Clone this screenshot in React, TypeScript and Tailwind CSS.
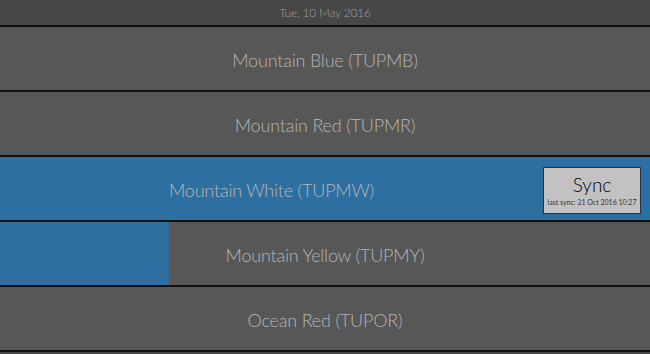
import React from 'react';

type Item = { name: string; code: string; active?: boolean; progress?: number };

const items: Item[] = [
  { name: 'Mountain Blue', code: 'TUPMB' },
  { name: 'Mountain Red', code: 'TUPMR' },
  { name: 'Mountain White', code: 'TUPMW', active: true },
  { name: 'Mountain Yellow', code: 'TUPMY', progress: 26 },
  { name: 'Ocean Red', code: 'TUPOR' },
];

function Row({ item }: { item: Item }) {
  return (
    <div
      className={`relative flex h-[65px] items-center border-b-2 border-[#111] ${
        item.active ? 'bg-[#2e6fa2]' : 'bg-[#575757]'
      }`}
    >
      {item.progress !== undefined && (
        <div className="absolute inset-y-0 left-0 bg-[#2e6fa2]" style={{ width: `${item.progress}%` }} />
      )}
      <span className="relative flex-1 pt-[3px] text-center text-[18px] font-light tracking-[-0.2px] text-[#b5b5b5]">
        {item.name} ({item.code})
      </span>
      {item.active && (
        <button className="mr-[9px] mt-[3px] flex h-[47px] w-[98px] flex-col items-center justify-center border border-[#333] bg-[#c2c2c2]">
          <span className="text-[19px] font-light leading-[24px] text-[#000]">Sync</span>
          <span className="text-[7px] leading-[10px] text-[#333]">last sync: 31 Oct 2016 10:27</span>
        </button>
      )}
    </div>
  );
}

export default function App() {
  return (
    <div className="h-[354px] w-[650px] overflow-hidden bg-[#474747] font-['Lato','Noto_Sans',sans-serif]">
      <div className="flex h-[27px] items-center justify-center border-b-2 border-[#111] text-[12px] font-light tracking-[-0.2px] text-[#a0a0a0]">
        Tue, 10 May 2016
      </div>
      {items.map((it) => (
        <Row key={it.code} item={it} />
      ))}
    </div>
  );
}
